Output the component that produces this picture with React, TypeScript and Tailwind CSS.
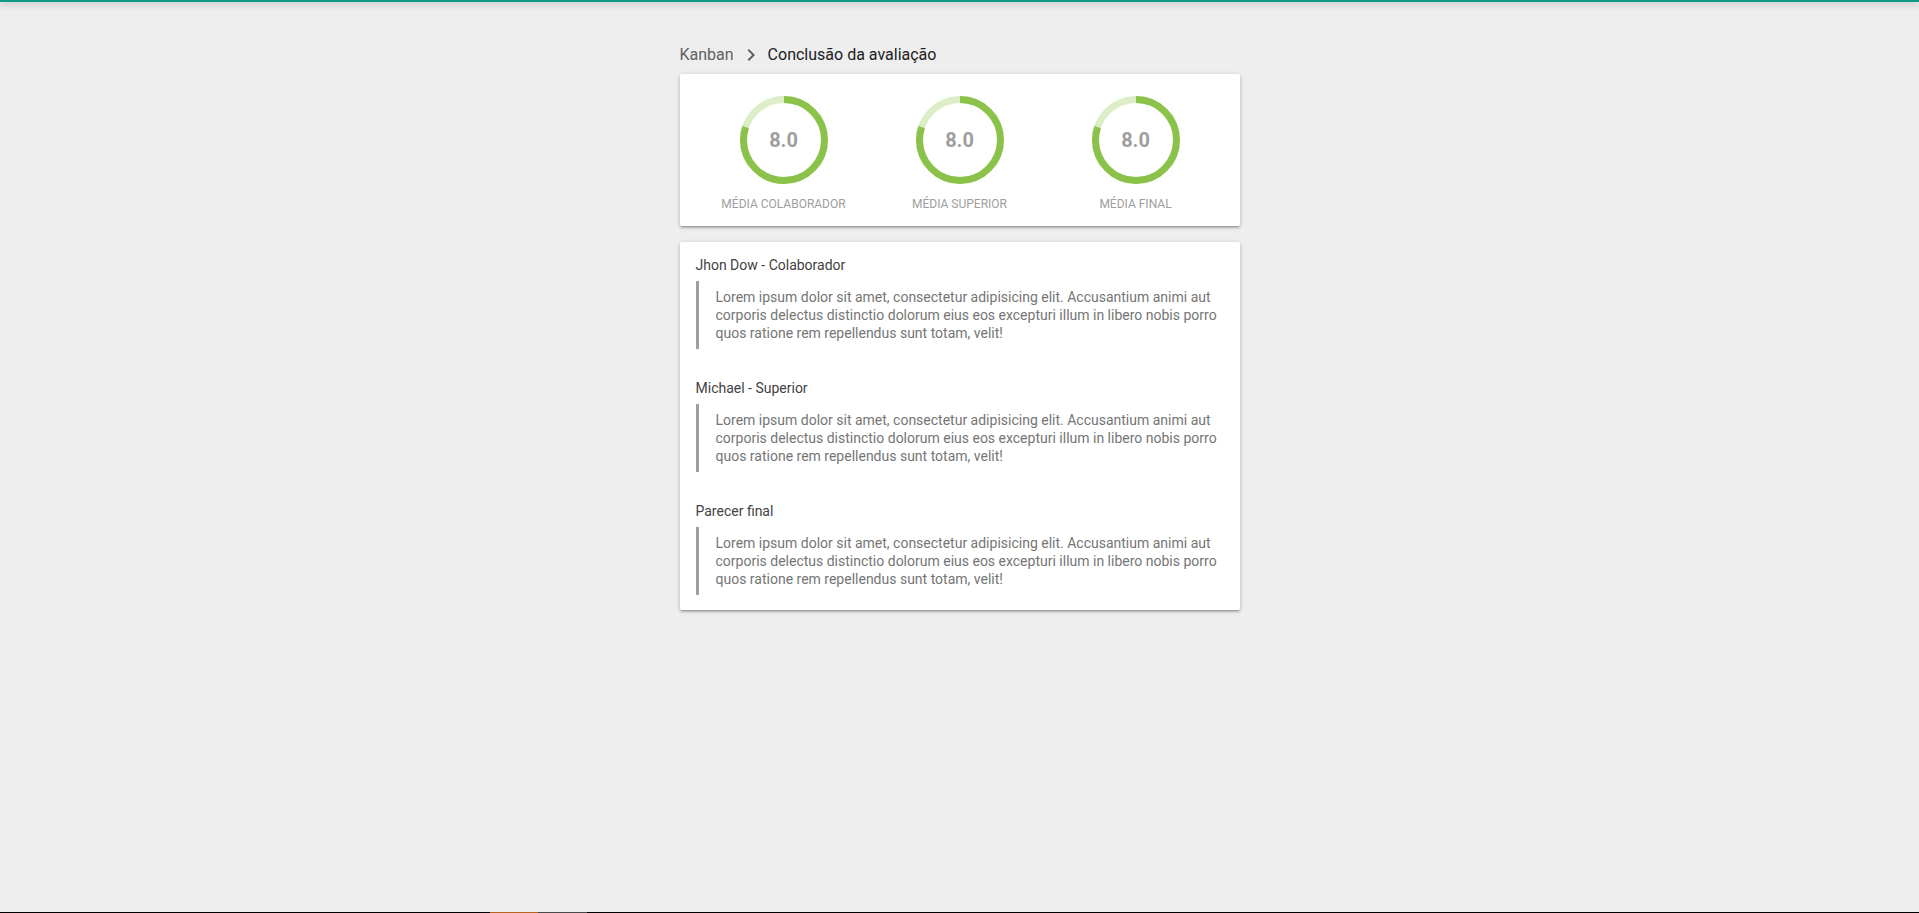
import React from "react";

const Ring = ({ value }: { value: string }) => {
  const size = 88;
  const sw = 7;
  const r = (size - sw) / 2;
  const c = 2 * Math.PI * r;
  return (
    <div className="relative w-[88px] h-[88px]">
      <svg width={size} height={size} viewBox={`0 0 ${size} ${size}`} className="-rotate-90">
        <circle cx={size / 2} cy={size / 2} r={r} fill="none" stroke="#dcedc8" strokeWidth={sw} />
        <circle
          cx={size / 2}
          cy={size / 2}
          r={r}
          fill="none"
          stroke="#8bc34a"
          strokeWidth={sw}
          strokeDasharray={`${c * 0.8} ${c}`}
        />
      </svg>
      <div className="absolute inset-0 flex items-center justify-center text-[20px] font-bold text-[#9e9e9e]">
        {value}
      </div>
    </div>
  );
};

const Stat = ({ label }: { label: string }) => (
  <div className="flex flex-col items-center">
    <Ring value="8.0" />
    <div className="mt-[12px] text-[12px] leading-[16px] text-[#9e9e9e] uppercase">{label}</div>
  </div>
);

const lorem =
  "Lorem ipsum dolor sit amet, consectetur adipisicing elit. Accusantium animi aut corporis delectus distinctio dolorum eius eos excepturi illum in libero nobis porro quos ratione rem repellendus sunt totam, velit!";

const Section = ({ title, last }: { title: string; last?: boolean }) => (
  <div className={last ? "" : "mb-[29px]"}>
    <div className="text-[14px] leading-[20px] text-[#424242]">{title}</div>
    <blockquote className="mt-[6px] border-l-[3px] border-[#9e9e9e] pl-[17px] py-[7px] text-[14px] leading-[18px] text-[#757575]">
      {lorem}
    </blockquote>
  </div>
);

const cardShadow =
  "shadow-[0_2px_2px_0_rgba(0,0,0,0.14),0_3px_1px_-2px_rgba(0,0,0,0.12),0_1px_5px_0_rgba(0,0,0,0.2)]";

export default function App() {
  return (
    <div className="min-h-[913px] flex flex-col bg-[#eeeeee] font-['Roboto',sans-serif]">
      <div className="h-[2px] bg-[#109882] shadow-[0_2px_6px_rgba(0,0,0,0.35)]" />
      <main className="flex-1 w-[560px] mx-auto pt-[41px]">
        <nav className="flex items-center text-[16px] leading-[20px]">
          <span className="text-[#616161]">Kanban</span>
          <svg width="24" height="24" viewBox="0 0 24 24" className="mx-[5px] text-[#616161]">
            <path d="M10 6 8.59 7.41 13.17 12l-4.58 4.59L10 18l6-6z" fill="currentColor" />
          </svg>
          <span className="text-[#212121]">Conclusão da avaliação</span>
        </nav>
        <section className={`mt-[7px] bg-white rounded-[2px] ${cardShadow} grid grid-cols-3 px-4 pt-[22px] pb-[14px]`}>
          <Stat label="Média Colaborador" />
          <Stat label="Média Superior" />
          <Stat label="Média Final" />
        </section>
        <section className={`mt-4 bg-white rounded-[2px] ${cardShadow} px-4 pt-[13px] pb-[15px]`}>
          <Section title="Jhon Dow - Colaborador" />
          <Section title="Michael - Superior" />
          <Section title="Parecer final" last />
        </section>
      </main>
      <div className="h-px bg-black flex">
        <div className="ml-[490px] w-[48px] bg-[#b5651d]" />
        <div className="w-[49px] bg-[#4a4a4a]" />
      </div>
    </div>
  );
}
